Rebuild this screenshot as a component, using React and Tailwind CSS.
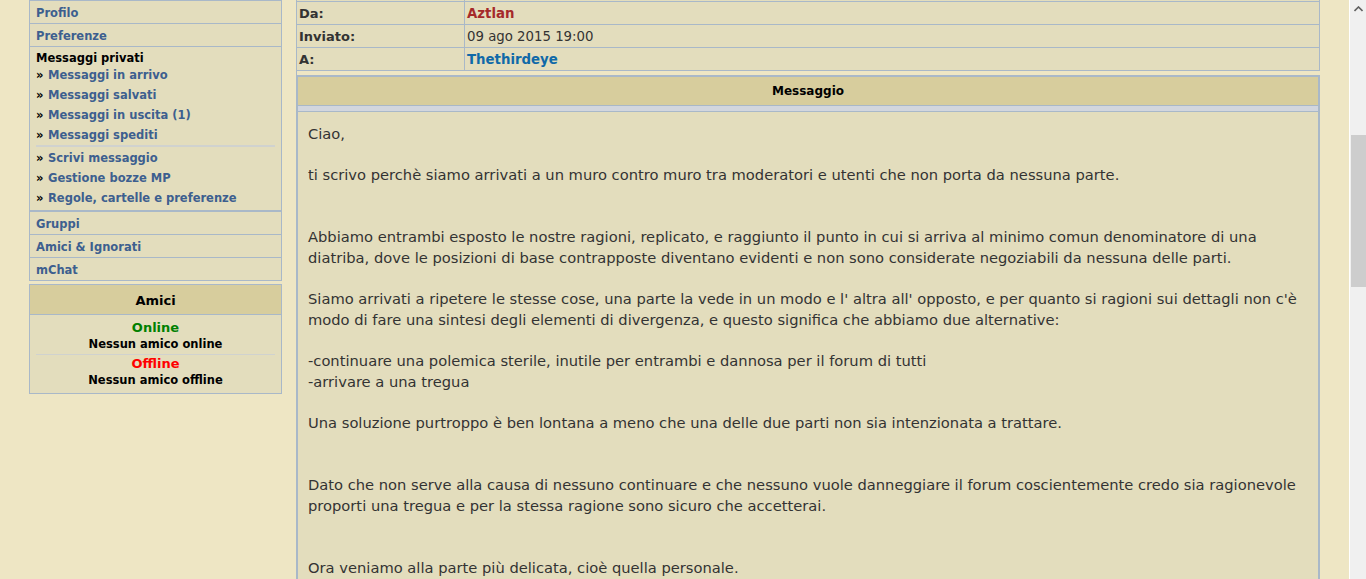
import React from 'react'

const links1 = ['Messaggi in arrivo', 'Messaggi salvati', 'Messaggi in uscita (1)', 'Messaggi spediti']
const links2 = ['Scrivi messaggio', 'Gestione bozze MP', 'Regole, cartelle e preferenze']

const body = [
  'Ciao,',
  '',
  'ti scrivo perchè siamo arrivati a un muro contro muro tra moderatori e utenti che non porta da nessuna parte.',
  '',
  '',
  'Abbiamo entrambi esposto le nostre ragioni, replicato, e raggiunto il punto in cui si arriva al minimo comun denominatore di una',
  'diatriba, dove le posizioni di base contrapposte diventano evidenti e non sono considerate negoziabili da nessuna delle parti.',
  '',
  "Siamo arrivati a ripetere le stesse cose, una parte la vede in un modo e l' altra all' opposto, e per quanto si ragioni sui dettagli non c'è",
  'modo di fare una sintesi degli elementi di divergenza, e questo significa che abbiamo due alternative:',
  '',
  '-continuare una polemica sterile, inutile per entrambi e dannosa per il forum di tutti',
  '-arrivare a una tregua',
  '',
  'Una soluzione purtroppo è ben lontana a meno che una delle due parti non sia intenzionata a trattare.',
  '',
  '',
  'Dato che non serve alla causa di nessuno continuare e che nessuno vuole danneggiare il forum coscientemente credo sia ragionevole',
  'proporti una tregua e per la stessa ragione sono sicuro che accetterai.',
  '',
  '',
  'Ora veniamo alla parte più delicata, cioè quella personale.',
]

const NavLink = ({ children }) => (
  <div className="flex items-center h-[20px] pt-[4px]">
    <span className="text-black w-[12px]">»</span>
    <span className="text-[#3d5f8f]">{children}</span>
  </div>
)

const SideRow = ({ children, last }) => (
  <div className={`flex items-center px-[6px] pt-[4px] text-[#3d5f8f] ${last ? 'h-[22px]' : 'h-[23px] border-b border-[#a9b8c8]'}`}>
    {children}
  </div>
)

const Sidebar = () => (
  <div className="w-[253px] shrink-0 flex flex-col">
    <div className="border border-[#a9b8c8] bg-[#e3ddbd] text-[11.5px] font-bold">
      <SideRow>Profilo</SideRow>
      <SideRow>Preferenze</SideRow>
      <div className="px-[6px] pt-[3px] pb-[3px] border-b-2 border-[#a9b8c8]">
        <div className="h-[14px] pt-[4px] flex items-center text-black">Messaggi privati</div>
        {links1.map((l) => <NavLink key={l}>{l}</NavLink>)}
        <div className="h-[2px] bg-[#d0d2cf] mt-[1px]" />
        {links2.map((l) => <NavLink key={l}>{l}</NavLink>)}
      </div>
      <SideRow>Gruppi</SideRow>
      <SideRow>Amici &amp; Ignorati</SideRow>
      <SideRow last>mChat</SideRow>
    </div>

    <div className="mt-[3px] border border-[#a9b8c8] bg-[#e3ddbd] text-center font-bold">
      <div className="h-[30px] pt-[2px] flex items-center justify-center bg-[#d7cd9d] border-b border-[#a9b8c8] text-[13px] text-black">Amici</div>
      <div className="px-[6px] pt-[4px] pb-[4px]">
        <div className="text-[13px] leading-[17px] text-[#008000]">Online</div>
        <div className="text-[11.5px] leading-[17px] text-black">Nessun amico online</div>
        <div className="h-px bg-[#d0d2cf] mt-[1px]" />
        <div className="text-[13px] leading-[17px] text-[#ff0000]">Offline</div>
        <div className="text-[11.5px] leading-[17px] text-black">Nessun amico offline</div>
      </div>
    </div>
  </div>
)

const InfoRow = ({ label, children, last }) => (
  <div className={`flex ${last ? 'h-[22px]' : 'h-[23px] border-b border-[#a9b8c8]'}`}>
    <div className="w-[168px] shrink-0 flex items-center pl-[2px] pt-[1px] border-r border-[#a9b8c8] font-bold text-[13px] text-[#333]">{label}</div>
    <div className="flex-1 flex items-center pl-[2px] pt-[1px] text-[13.3px]">{children}</div>
  </div>
)

const Main = () => (
  <div className="w-[1024px] shrink-0 border-l border-[#a9b8c8] flex flex-col">
    <div className="border border-l-0 border-[#a9b8c8] bg-[#e3ddbd] mt-[-22px]">
      <InfoRow label="">&nbsp;</InfoRow>
      <InfoRow label="Da:"><span className="font-bold text-[#a52a2a]">Aztlan</span></InfoRow>
      <InfoRow label="Inviato:"><span className="text-[#333]">09 ago 2015 19:00</span></InfoRow>
      <InfoRow label="A:" last><span className="font-bold text-[#1069a8]">Thethirdeye</span></InfoRow>
    </div>
    <div className="mt-[4px] border-2 border-l border-b-0 border-[#a9b8c8] bg-[#e3ddbd] flex-1 flex flex-col">
      <div className="h-[29px] flex items-center justify-center bg-[#d7cd9d] border-b border-[#a9b8c8] text-[12px] font-bold text-black">Messaggio</div>
      <div className="h-[6px] bg-[#d2d6de] border-b border-[#a9b8c8]" />
      <div className="pl-[10px] pt-[12px] text-[14.7px] leading-[20.65px] text-[#333]">
        {body.map((l, i) => <div key={i} className="whitespace-pre">{l || '\u00a0'}</div>)}
      </div>
    </div>
  </div>
)

const Scrollbar = () => (
  <div className="w-[17px] shrink-0 bg-[#f0f0f0] border-l border-white flex flex-col items-center">
    <div className="h-[17px] flex items-center justify-center">
      <svg width="9" height="6" viewBox="0 0 9 6"><path d="M0.5 5 L4.5 1 L8.5 5" fill="none" stroke="#606060" strokeWidth="1.6" /></svg>
    </div>
    <div className="w-[15px] h-[152px] bg-[#cdcdcd] mt-[118px]" />
  </div>
)

export default function App() {
  return (
    <div className="flex h-[579px] overflow-hidden bg-[#eee6c4]" style={{ fontFamily: '"DejaVu Sans", Verdana, sans-serif' }}>
      <div className="flex-1 flex pl-[29px] gap-[14px]">
        <Sidebar />
        <Main />
      </div>
      <Scrollbar />
    </div>
  )
}
